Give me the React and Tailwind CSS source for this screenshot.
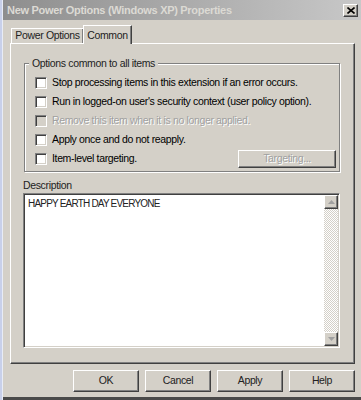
import React from 'react';

const font = { fontFamily: '"Liberation Sans", Arial, sans-serif' };

const raised =
  'border border-t-white border-l-white border-r-[#404040] border-b-[#404040] shadow-[inset_-1px_-1px_0_#808080]';

const Checkbox = ({ disabled }) => (
  <span
    className={`block w-[12px] h-[12px] border border-t-[#808080] border-l-[#808080] border-r-white border-b-white shadow-[inset_1px_1px_0_#404040,inset_-1px_-1px_0_#d4d0c8] ${
      disabled ? 'bg-[#d4d0c8]' : 'bg-white'
    }`}
  />
);

const Option = ({ label, disabled }) => (
  <div className="flex items-center h-[19px]">
    <Checkbox disabled={disabled} />
    <span
      className={`ml-[5px] whitespace-nowrap ${
        disabled ? 'text-[#a0a0a0] [text-shadow:1px_1px_0_#fff]' : 'text-black'
      }`}
    >
      {label}
    </span>
  </div>
);

const ScrollArrow = ({ up }) => (
  <div className={`w-[14px] h-[14px] bg-[#d4d0c8] flex items-center justify-center ${raised}`}>
    <svg width="7" height="4" viewBox="0 0 7 4">
      <path d={up ? 'M3.5 0 L7 4 L0 4 Z' : 'M0 0 L7 0 L3.5 4 Z'} fill="#a0a0a0" />
    </svg>
  </div>
);

const DlgButton = ({ children }) => (
  <button
    type="button"
    className={`w-[66px] h-[22px] bg-[#d4d0c8] text-[#222] text-[10.5px] tracking-[-0.35px] ${raised}`}
  >
    {children}
  </button>
);

export default function App() {
  return (
    <div
      className="w-[361px] h-[400px] bg-[#d4d0c8] flex overflow-hidden text-[10.5px] tracking-[-0.35px]"
      style={font}
    >
      <div className="w-[3px] bg-[#c8d0ea] border-r border-[#e8ecf6]" />
      <div className="flex-1 flex flex-col">
        {/* title bar */}
        <div className="h-[20px] flex items-center justify-between pl-[4px] pr-[3px] bg-gradient-to-r from-[#8e8e8e] to-[#c8c8c8]">
          <span className="font-bold text-[11px] text-[#dcdad4] tracking-[-0.3px] whitespace-nowrap">
            New Power Options (Windows XP) Properties
          </span>
          <div className={`w-[15px] h-[13px] bg-[#d4d0c8] flex items-center justify-center ${raised}`}>
            <svg width="8" height="7" viewBox="0 0 8 7">
              <path d="M0.5 0.5 L7.5 6.5 M7.5 0.5 L0.5 6.5" stroke="#000" strokeWidth="1.6" />
            </svg>
          </div>
        </div>

        {/* tabs */}
        <div className="h-[23px] flex items-end pl-[8px]">
          <div className="h-[15px] w-[72px] flex items-center justify-center border-t border-l border-white shadow-[inset_-1px_0_0_#808080] text-[#222] whitespace-nowrap">
            Power Options
          </div>
          <div className="h-[19px] w-[49px] flex items-start pt-[2px] justify-center border-t border-l border-white border-r border-r-[#404040] shadow-[inset_-1px_0_0_#808080] bg-[#d4d0c8] relative z-10 -mb-[1px] text-[#222] whitespace-nowrap">
            Common
          </div>
        </div>

        {/* panel */}
        <div className="ml-[7px] w-[345px] h-[321px] border border-t-white border-l-white border-r-[#404040] border-b-[#404040] shadow-[inset_-1px_-1px_0_#808080] pt-[19px] pl-[13px]">
          <div className="relative w-[316px] h-[109px] border border-[#808080] shadow-[1px_1px_0_#fff,inset_1px_1px_0_#fff]">
            <span className="absolute -top-[8px] left-[4px] px-[3px] bg-[#d4d0c8] text-[#222] whitespace-nowrap">
              Options common to all items
            </span>
            <div className="pt-[9px] pl-[10px] flex flex-col text-[#222]">
              <Option label="Stop processing items in this extension if an error occurs." />
              <Option label="Run in logged-on user's security context (user policy option)." />
              <Option label="Remove this item when it is no longer applied." disabled />
              <Option label="Apply once and do not reapply." />
              <div className="flex items-center">
                <div className="flex-1">
                  <Option label="Item-level targeting." />
                </div>
                <div
                  className={`w-[98px] h-[18px] mr-[3px] bg-[#d4d0c8] flex items-center justify-center text-[#a0a0a0] [text-shadow:1px_1px_0_#fff] ${raised}`}
                >
                  Targeting...
                </div>
              </div>
            </div>
          </div>

          <div className="mt-[6px] -ml-[1px] h-[14px] text-[#222]">Description</div>

          <div className="-ml-[1px] mt-[1px] w-[317px] h-[155px] bg-white flex border border-t-[#808080] border-l-[#808080] border-r-white border-b-white shadow-[inset_1px_1px_0_#404040,inset_-1px_-1px_0_#d4d0c8]">
            <div className="flex-1 pl-[4px] pt-[2px] text-[#222] text-[10px] tracking-[-0.8px] whitespace-nowrap">
              HAPPY EARTH DAY EVERYONE
            </div>
            <div className="w-[14px] mt-[1px] mb-[1px] mr-[1px] flex flex-col bg-[repeating-conic-gradient(#d4d0c8_0_25%,#ffffff_0_50%)] bg-[length:2px_2px]">
              <ScrollArrow up />
              <div className="flex-1" />
              <ScrollArrow />
            </div>
          </div>
        </div>

        {/* buttons */}
        <div className="mt-[6px] flex justify-end gap-[6px] pr-[6px]">
          <DlgButton>OK</DlgButton>
          <DlgButton>Cancel</DlgButton>
          <DlgButton>Apply</DlgButton>
          <DlgButton>Help</DlgButton>
        </div>

        <div className="mt-auto h-[3px] bg-[#4a4a4a]" />
      </div>
    </div>
  );
}
